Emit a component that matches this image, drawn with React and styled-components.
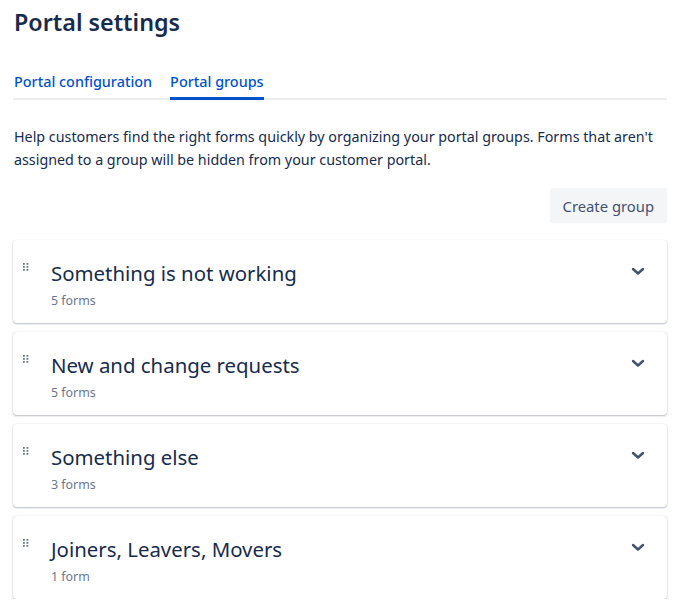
import styled, { createGlobalStyle } from "styled-components";

const Global = createGlobalStyle`
  body {
    margin: 0;
    background: #fff;
    font-family: "Noto Sans", "Open Sans", sans-serif;
    color: #172b4d;
  }
`;

const Page = styled.div`
  padding: 6px 15px 0 13px;
`;

const Title = styled.h1`
  margin: 0 0 0 1px;
  font-size: 23.3px;
  font-weight: 600;
  line-height: 32px;
  color: #172b4d;
`;

const Tabs = styled.div`
  display: flex;
  gap: 18px;
  margin-top: 35px;
  padding-left: 1px;
  border-bottom: 2px solid #ebecf0;
`;

const Tab = styled.div`
  font-size: 14.4px;
  font-weight: 500;
  color: #0052cc;
  padding-bottom: 6px;
  margin-bottom: -2px;
  border-bottom: 3px solid ${(p) => (p.$active ? "#0052cc" : "transparent")};
  line-height: 18px;
`;

const Intro = styled.p`
  margin: 25px 0 0 1px;
  font-size: 14.3px;
  line-height: 23px;
  color: #172b4d;
`;

const Actions = styled.div`
  display: flex;
  justify-content: flex-end;
  margin-top: 17px;
`;

const Button = styled.button`
  border: none;
  border-radius: 3px;
  background: #f4f5f7;
  color: #42526e;
  font-family: inherit;
  font-size: 14.8px;
  height: 35px;
  padding: 0 13px;
`;

const List = styled.div`
  display: flex;
  flex-direction: column;
  gap: 9px;
  margin-top: 17px;
`;

const Card = styled.div`
  display: flex;
  align-items: flex-start;
  height: 83px;
  box-sizing: border-box;
  padding: 19px 22px 0 10px;
  border-radius: 4px;
  background: #fff;
  box-shadow: 0 1px 2px rgba(9, 30, 66, 0.28), 0 0 1px rgba(9, 30, 66, 0.2);
`;

const Handle = styled.div`
  display: flex;
  width: 9px;
  padding-top: 4px;
  color: #6b778c;
`;

const Body = styled.div`
  flex: 1;
  padding-left: 19px;
`;

const Name = styled.div`
  font-size: 20.4px;
  line-height: 28px;
  color: #172b4d;
`;

const Count = styled.div`
  margin-top: 7px;
  font-size: 12.4px;
  line-height: 14px;
  color: #6b778c;
`;

const Chevron = styled.div`
  display: flex;
  padding-top: 8px;
  color: #42526e;
`;

const groups = [
  ["Something is not working", "5 forms"],
  ["New and change requests", "5 forms"],
  ["Something else", "3 forms"],
  ["Joiners, Leavers, Movers", "1 form"],
];

const Dots = () => (
  <svg width="6" height="8" viewBox="0 0 6 8" fill="currentColor">
    {[0, 3, 6].map((y) =>
      [0, 3.5].map((x) => <rect key={`${x}-${y}`} x={x} y={y} width="1.8" height="1.8" />)
    )}
  </svg>
);

const Down = () => (
  <svg width="14" height="9" viewBox="0 0 14 9" fill="none">
    <path d="M2 2 L7 6.5 L12 2" stroke="currentColor" strokeWidth="2.4" strokeLinecap="round" strokeLinejoin="round" />
  </svg>
);

export default () => {
  return (
    <Page>
      <Global />
      <Title>Portal settings</Title>
      <Tabs>
        <Tab>Portal configuration</Tab>
        <Tab $active>Portal groups</Tab>
      </Tabs>
      <Intro>
        Help customers find the right forms quickly by organizing your portal groups. Forms that aren't
        assigned to a group will be hidden from your customer portal.
      </Intro>
      <Actions>
        <Button>Create group</Button>
      </Actions>
      <List>
        {groups.map(([name, count]) => (
          <Card key={name}>
            <Handle>
              <Dots />
            </Handle>
            <Body>
              <Name>{name}</Name>
              <Count>{count}</Count>
            </Body>
            <Chevron>
              <Down />
            </Chevron>
          </Card>
        ))}
      </List>
    </Page>
  );
};
